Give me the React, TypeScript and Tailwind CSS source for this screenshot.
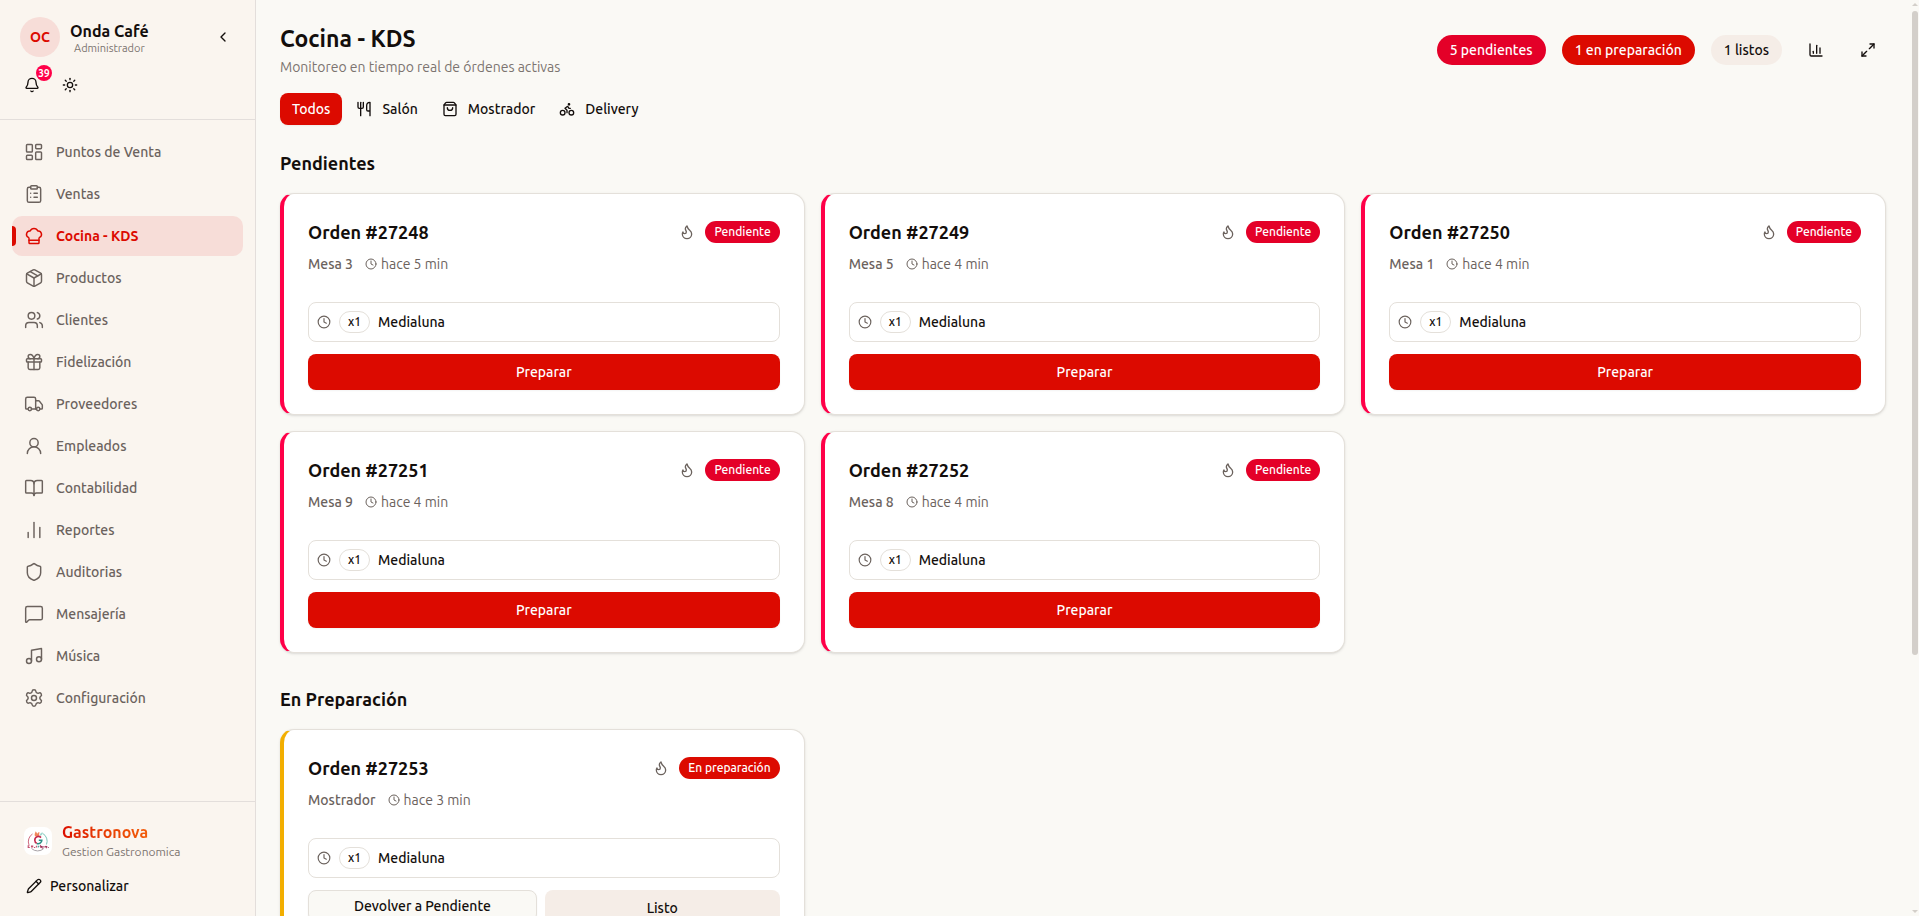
import type { ReactNode } from "react";
import {
  Bell,
  Bike,
  BookOpen,
  ChartColumn,
  ChartNoAxesColumn,
  ChefHat,
  ChevronLeft,
  ClipboardList,
  Clock,
  Flame,
  Gift,
  LayoutDashboard,
  Maximize2,
  MessageSquare,
  Music,
  Package,
  Pencil,
  Settings,
  Shield,
  ShoppingBag,
  Sun,
  Truck,
  UserRound,
  Users,
  Utensils,
  type LucideIcon,
} from "lucide-react";

const NAV: { label: string; icon: LucideIcon; active?: boolean }[] = [
  { label: "Puntos de Venta", icon: LayoutDashboard },
  { label: "Ventas", icon: ClipboardList },
  { label: "Cocina - KDS", icon: ChefHat, active: true },
  { label: "Productos", icon: Package },
  { label: "Clientes", icon: Users },
  { label: "Fidelización", icon: Gift },
  { label: "Proveedores", icon: Truck },
  { label: "Empleados", icon: UserRound },
  { label: "Contabilidad", icon: BookOpen },
  { label: "Reportes", icon: ChartNoAxesColumn },
  { label: "Auditorias", icon: Shield },
  { label: "Mensajería", icon: MessageSquare },
  { label: "Música", icon: Music },
  { label: "Configuración", icon: Settings },
];

type Order = { id: number; place: string; minutes: number };

const PENDING: Order[] = [
  { id: 27248, place: "Mesa 3", minutes: 5 },
  { id: 27249, place: "Mesa 5", minutes: 4 },
  { id: 27250, place: "Mesa 1", minutes: 4 },
  { id: 27251, place: "Mesa 9", minutes: 4 },
  { id: 27252, place: "Mesa 8", minutes: 4 },
];

const IN_PROGRESS: Order[] = [{ id: 27253, place: "Mostrador", minutes: 3 }];

function BrandLogo() {
  return (
    <svg viewBox="0 0 28 28" className="size-7 shrink-0" aria-hidden="true">
      <rect width="28" height="28" rx="8" fill="#fff" />
      <g fill="none" strokeWidth="1">
        <path d="M8.500 7A9 9 0 0 0 5 18" stroke="#cf6a80" />
        <path d="M18.500 6.300A9 9 0 0 1 22.500 17.500" stroke="#7cc6bb" />
        <path d="M7.500 21.500A9 9 0 0 0 19.800 21.500" stroke="#a9a3a8" />
      </g>
      <path d="M11 9.200C10.200 7.400 11 5.800 11.800 4.200c.5 1.200 1.200 1.600 1.400 2.600.5-.8 1-1.400 2.200-1.700-.2 1.400.2 2.500-.8 4.100z" fill="#f0855a" />
      <path d="M15.600 8.800c.2-2 1.400-3.400 3-3.300.5 1.500-.9 3.100-3 3.300z" fill="#a3d8cf" />
      <path d="M17 10.600A3.600 3.600 0 0 0 10.800 13.200a3.600 3.600 0 0 0 2 3.200" fill="none" stroke="#c4284c" strokeWidth="1.600" />
      <path d="M12.800 16.400a3.600 3.600 0 0 0 5-3.200H14.800" fill="none" stroke="#2b8f86" strokeWidth="1.600" />
      <g fill="none" strokeWidth="1.100">
        <path d="M5.500 18.700H4.200v1.800h1.600M7.500 20.600v-1.500h1.200v1.500M10 20.500h1.200M12.400 18.800v1.800" stroke="#c4506e" />
        <path d="M14.200 20.500v-1.300h1.200" stroke="#4a9c94" />
        <path d="M16.700 20.700v-1.700l1.400 1.700v-1.700M19.300 19.900h1.300M21.400 19.100l.8 1.500.8-1.500M23.800 20.500h.9" stroke="#a02c56" />
      </g>
    </svg>
  );
}

function Sidebar() {
  return (
    <aside className="flex w-64 shrink-0 flex-col border-r border-[#e3dedb] bg-[#faf5ef]">
      <div className="h-[120px] border-b border-[#e3dedb] px-5 pt-[17px]">
        <div className="flex items-center gap-2.5">
          <div className="flex size-10 items-center justify-center rounded-full bg-[#f7ddd8] text-sm font-semibold text-[#dc0a00]">
            OC
          </div>
          <div className="flex-1 pt-0.5">
            <p className="text-base leading-5 font-semibold text-[#130e0c]">Onda Café</p>
            <p className="px-1 text-[11px] leading-[14px] text-[#7c7470]">Administrador</p>
          </div>
          <button type="button" aria-label="Contraer menú" className="flex size-6 items-center justify-center">
            <ChevronLeft className="size-4" />
          </button>
        </div>
        <div className="mt-4 flex gap-3.5">
          <button type="button" aria-label="Notificaciones" className="relative flex size-6 items-center justify-center">
            <Bell className="size-4" />
            <span className="absolute -top-2 -right-2 flex size-4 items-center justify-center rounded-full bg-[#ff0048] text-[10px] font-semibold text-white">
              39
            </span>
          </button>
          <button type="button" aria-label="Cambiar tema" className="flex size-6 items-center justify-center">
            <Sun className="size-4" />
          </button>
        </div>
      </div>

      <nav className="flex flex-1 flex-col gap-0.5 px-3 pt-3">
        {NAV.map(({ label, icon: Icon, active }) => (
          <a
            key={label}
            href="#"
            aria-current={active ? "page" : undefined}
            className={
              active
                ? "relative flex h-10 items-center gap-3 rounded-[10px] bg-[#f7ddd8] px-3 text-sm font-semibold text-[#dc0a00]"
                : "relative flex h-10 items-center gap-3 rounded-[10px] px-3 text-sm font-medium text-[#6b625d]"
            }
          >
            {active && <span className="absolute top-2.5 left-0 h-5 w-1 rounded-r-full bg-[#dc0a00]" />}
            <Icon className="size-5" strokeWidth={1.75} />
            {label}
          </a>
        ))}
      </nav>

      <div className="border-t border-[#e3dedb] px-3 pt-5 pb-3.5">
        <div className="flex items-center gap-2.5 px-3">
          <BrandLogo />
          <div>
            <p className="w-fit bg-linear-to-r from-[#dc0a00] to-[#f25c0a] bg-clip-text text-base leading-5 font-semibold text-transparent">
              Gastronova
            </p>
            <p className="mt-0.5 text-xs leading-4 text-[#7c7470]">Gestion Gastronomica</p>
          </div>
        </div>
        <button type="button" className="mt-2.5 flex h-8 items-center gap-2 px-3.5 text-sm font-medium">
          <Pencil className="size-4" />
          Personalizar
        </button>
      </div>
    </aside>
  );
}

function Tab({ icon: Icon, children }: { icon: LucideIcon; children: ReactNode }) {
  return (
    <button type="button" className="flex h-8 items-center gap-2.5 rounded-lg px-3 text-sm font-medium">
      <Icon className="size-4" />
      {children}
    </button>
  );
}

function OrderCard({ order, preparing }: { order: Order; preparing?: boolean }) {
  return (
    <article
      className={
        preparing
          ? "rounded-[14px] border border-l-4 border-[#e4e0da] border-l-[#f2ae00] bg-white p-6 shadow-sm"
          : "rounded-[14px] border border-l-4 border-[#e4e0da] border-l-[#ff0048] bg-white p-6 shadow-sm"
      }
    >
      <div className="flex items-center justify-between">
        <h3 className="text-lg leading-7 font-semibold">Orden #{order.id}</h3>
        <div className="flex items-center gap-2.5">
          <Flame className="size-4 text-[#6b625d]" />
          <span
            className={
              preparing
                ? "rounded-full border border-transparent bg-[#dc0a00] bg-origin-border px-2 py-0.5 text-xs font-medium text-white"
                : "rounded-full border border-transparent bg-[#e40028] bg-origin-border px-2 py-0.5 text-xs font-medium text-white"
            }
          >
            {preparing ? "En preparación" : "Pendiente"}
          </span>
        </div>
      </div>
      <div className="mt-2 flex items-center gap-3 text-sm text-[#6b625d]">
        <span className="font-medium">{order.place}</span>
        <span className="flex items-center gap-1">
          <Clock className="size-3" />
          hace {order.minutes} min
        </span>
      </div>
      <div className="mt-7 flex items-center gap-2 rounded-lg border border-[#e4e0da] p-2">
        <Clock className="size-3.5 text-[#6b625d]" />
        <span className="rounded-full border border-[#e4e0da] px-2 py-0.5 text-xs font-medium">x1</span>
        <span className="text-sm font-medium">Medialuna</span>
      </div>
      <div className="mt-3 flex gap-2">
        {preparing ? (
          <>
            <button
              type="button"
              className="h-8 flex-1 rounded-lg border border-[#e4e0da] bg-[#faf9f5] px-3 text-sm font-medium shadow-xs"
            >
              Devolver a Pendiente
            </button>
            <button type="button" className="h-9 flex-1 rounded-lg bg-[#f5ede7] px-4 text-sm font-medium">
              Listo
            </button>
          </>
        ) : (
          <button
            type="button"
            className="h-9 flex-1 rounded-lg bg-[#dc0a00] px-4 text-sm font-medium text-white shadow-xs"
          >
            Preparar
          </button>
        )}
      </div>
    </article>
  );
}

function Section({ title, children }: { title: string; children: ReactNode }) {
  return (
    <section>
      <h2 className="mb-4 text-lg leading-7 font-semibold">{title}</h2>
      <div className="grid grid-cols-3 gap-4">{children}</div>
    </section>
  );
}

export default function App() {
  return (
    <div className="flex h-screen overflow-hidden bg-[#faf9f5] font-['Ubuntu','Open_Sans',sans-serif] text-[#130e0c]">
      <Sidebar />
      <main className="min-w-0 flex-1 overflow-y-auto p-6 [scrollbar-width:none]">
        <header className="flex items-center justify-between">
          <div>
            <h1 className="text-[23px] leading-[29px] font-semibold">Cocina - KDS</h1>
            <p className="mt-1 text-sm text-[#7c7470]">Monitoreo en tiempo real de órdenes activas</p>
          </div>
          <div className="flex items-center gap-4 pb-px text-sm font-medium">
            <span className="rounded-full bg-[#e40028] px-[13px] py-[5px] text-white">5 pendientes</span>
            <span className="rounded-full bg-[#dc0a00] px-[13px] py-[5px] text-white">1 en preparación</span>
            <span className="rounded-full bg-[#f5ede7] px-[13px] py-[5px]">1 listos</span>
            <button type="button" aria-label="Estadísticas" className="flex size-9 items-center justify-center">
              <ChartColumn className="size-4" />
            </button>
            <button type="button" aria-label="Pantalla completa" className="flex size-9 items-center justify-center">
              <Maximize2 className="size-4" />
            </button>
          </div>
        </header>

        <div className="mt-4 flex">
          <button
            type="button"
            className="mr-0.5 h-8 rounded-lg bg-[#dc0a00] px-3 text-sm font-medium text-white shadow-xs"
          >
            Todos
          </button>
          <Tab icon={Utensils}>Salón</Tab>
          <Tab icon={ShoppingBag}>Mostrador</Tab>
          <Tab icon={Bike}>Delivery</Tab>
        </div>

        <div className="mt-6 flex flex-col gap-8">
          <Section title="Pendientes">
            {PENDING.map((order) => (
              <OrderCard key={order.id} order={order} />
            ))}
          </Section>
          <Section title="En Preparación">
            {IN_PROGRESS.map((order) => (
              <OrderCard key={order.id} order={order} preparing />
            ))}
          </Section>
        </div>
      </main>
      <div aria-hidden="true" className="flex w-[9px] shrink-0 flex-col items-center justify-between py-[3px]">
        <div className="flex flex-1 flex-col items-center gap-[5px]">
          <svg viewBox="0 0 6 3" className="h-[3px] w-1.5" fill="#d3cfca">
            <path d="M0 3 3 0l3 3z" />
          </svg>
          <div className="h-[71%] w-1.5 rounded-full bg-[#d3cfca]" />
        </div>
        <svg viewBox="0 0 6 3" className="h-[3px] w-1.5" fill="#d3cfca">
          <path d="M0 0h6L3 3z" />
        </svg>
      </div>
    </div>
  );
}
